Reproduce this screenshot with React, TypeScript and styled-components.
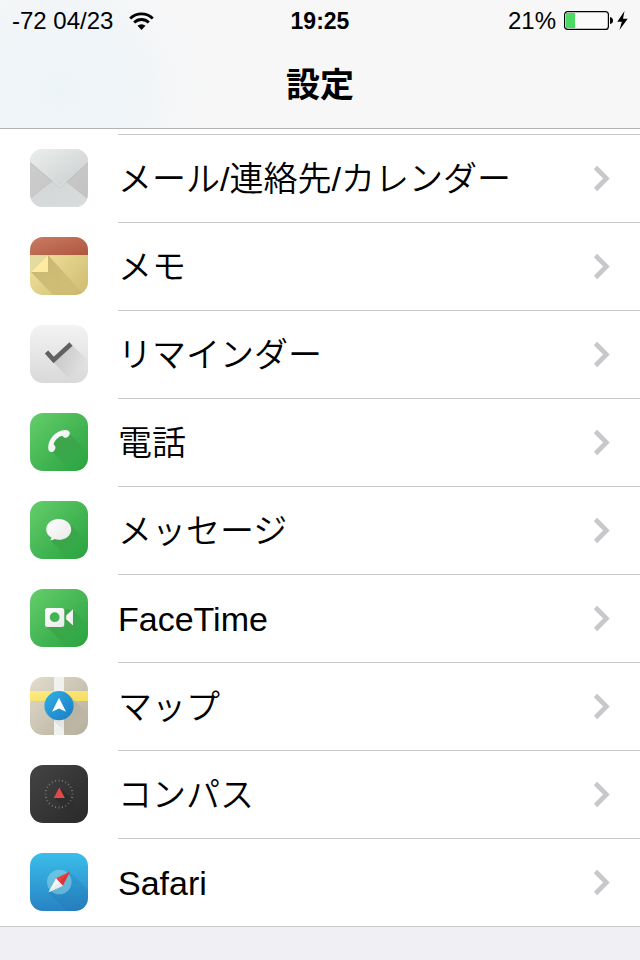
import React from "react";
import styled, { createGlobalStyle } from "styled-components";

const GlobalStyle = createGlobalStyle`
  *, *::before, *::after { box-sizing: border-box; }
  body {
    margin: 0;
    background: #efeff4;
    color: #000;
    font-family: "Liberation Sans", "Noto Sans CJK JP", sans-serif;
  }
`;

const Header = styled.header`
  border-bottom: 1px solid #b2b2b2;
  background: radial-gradient(ellipse 150px 140px at 60px 90px, #edf4f8 0%, #f1f5f8 50%, #f7f7f7 100%);
`;

const StatusBar = styled.div`
  display: grid;
  grid-template-columns: 1fr auto 1fr;
  align-items: center;
  height: 42px;
  padding: 0 12px;
  font-size: 24px;
  line-height: 42px;
`;

const StatusGroup = styled.div<{ $end?: boolean }>`
  display: flex;
  align-items: center;
  justify-content: ${(p) => (p.$end ? "flex-end" : "flex-start")};
  gap: ${(p) => (p.$end ? 8 : 16)}px;
`;

const Clock = styled.time`
  font-size: 23px;
  font-weight: 700;
`;

const Title = styled.h1`
  margin: 0;
  height: 86px;
  font-size: 34px;
  line-height: 86px;
  font-weight: 700;
  text-align: center;
`;

const List = styled.ul`
  list-style: none;
  margin: 0;
  padding: 5px 0 0;
  background: #fff;
  border-bottom: 1px solid #c8c7cc;
`;

const Label = styled.span`
  display: flex;
  flex: 1;
  align-items: center;
  justify-content: space-between;
  gap: 16px;
  padding-right: 30px;
  border-bottom: 1px solid #c8c7cc;
`;

const Name = styled.span`
  font-family: "Liberation Sans", "Noto Sans CJK JP DemiLight", "Noto Sans CJK JP", sans-serif;
  font-size: 34px;
  font-weight: 350;
  line-height: 48px;
`;

const Item = styled.li`
  &:first-child ${Label} { border-top: 1px solid #c8c7cc; }
  &:first-child a { min-height: 89px; }
  &:first-child a > svg { margin-top: 15px; }
  &:last-child ${Label} { border-bottom: 0; }
  &:last-child a { min-height: 87px; }
`;

const RowLink = styled.a`
  display: flex;
  gap: 30px;
  min-height: 88px;
  padding-left: 30px;
  color: inherit;
  text-decoration: none;
`;

const AppIcon = styled.svg`
  flex: none;
  width: 58px;
  height: 58px;
  margin-top: 14px;
  border-radius: 13px;
`;

const Glyph = styled.svg`
  flex: none;
  display: block;
`;

const Battery = styled.span`
  display: flex;
  align-items: center;
  gap: 4px;
`;

type GradProps = { id: string; from: string; to: string; vertical?: boolean };

const Grad = ({ id, from, to, vertical }: GradProps) => (
  <linearGradient id={id} x1="0" y1="0" x2={vertical ? "0" : "1"} y2="1">
    <stop offset="0" stopColor={from} />
    <stop offset="1" stopColor={to} />
  </linearGradient>
);

const Shade = ({ id, opacity }: { id: string; opacity: number }) => (
  <linearGradient id={id} gradientUnits="userSpaceOnUse" x1="26" y1="26" x2="48" y2="48">
    <stop offset="0" stopColor="#000" stopOpacity={opacity} />
    <stop offset="1" stopColor="#000" stopOpacity="0" />
  </linearGradient>
);

type TileProps = GradProps & { shade?: number; children: React.ReactNode };

const Tile = ({ id, from, to, vertical, shade = 0.12, children }: TileProps) => (
  <AppIcon viewBox="0 0 58 58" aria-hidden="true">
    <defs>
      <Grad id={id} from={from} to={to} vertical={vertical} />
      <Shade id={`${id}-shade`} opacity={shade} />
      <Grad id={`${id}-white`} from="#ffffff" to="#e8e8e8" />
    </defs>
    <rect width="58" height="58" fill={`url(#${id})`} />
    {children}
  </AppIcon>
);

const MailIcon = () => (
  <Tile id="mail" from="#cecece" to="#c2c2c2">
    <defs>
      <Grad id="mail-flap" from="#eceeee" to="#cbcece" />
      <Grad id="mail-base" from="#d2d6d7" to="#d9dcdd" />
    </defs>
    <path d="M0 51L29 28L58 51V58H0Z" fill="url(#mail-base)" stroke="#e4e4e4" strokeWidth=".6" />
    <path d="M0 14L30 39.500L58 14Z" fill="#000" opacity=".05" />
    <path d="M0 0H58V12.500L31 37Q30 38 29 37L0 12.500Z" fill="url(#mail-flap)" stroke="#eeeeee" strokeWidth=".5" />
  </Tile>
);

const NotesIcon = () => (
  <Tile id="notes" from="#f9eaa4" to="#cdbb71">
    <defs>
      <Grad id="notes-top" from="#ca7c62" to="#ae5540" />
      <Grad id="notes-fold" from="#ffefb0" to="#fde99c" />
      <linearGradient id="notes-cast" gradientUnits="userSpaceOnUse" x1="10" y1="26" x2="38" y2="58">
        <stop offset="0" stopColor="#8c7630" stopOpacity=".35" />
        <stop offset="1" stopColor="#8c7630" stopOpacity=".08" />
      </linearGradient>
    </defs>
    <path d="M0 18H18L0 36Z" fill="#e4dba0" />
    <path d="M18 18L54 58H23L1 35Z" fill="url(#notes-cast)" />
    <path d="M18 18V35H1Z" fill="url(#notes-fold)" />
    <rect width="58" height="18" fill="url(#notes-top)" />
  </Tile>
);

const RemindersIcon = () => (
  <Tile id="reminders" from="#f3f3f3" to="#d9d9d9" vertical shade={0.14}>
    <path d="M42 20L58 36V58H43L24 38L33 29Z" fill="url(#reminders-shade)" />
    <path d="M16.500 27L23.700 35L41 19" fill="none" stroke="#616161" strokeWidth="4.600" />
  </Tile>
);

const PhoneIcon = () => (
  <Tile id="phone" from="#65cd6b" to="#27a23f">
    <path d="M39 20L58 39V58H42L20 37Q24 24 39 20Z" fill="url(#phone-shade)" />
    <path
      d="M18.200 35C18 26 26 17.400 35 17C38 16.800 40 18.500 39.800 20.700C39.500 23.500 36.500 25.400 34.200 24.400C33.300 24 33 22.700 32 22.700C28.500 23.400 24.800 27 23.700 31C23.600 32 25.300 32.600 25.400 34C25.700 37 23.500 39.200 21.300 39C19.200 38.800 18.200 37.400 18.200 35Z"
      fill="url(#phone-white)"
    />
  </Tile>
);

const MessagesIcon = () => (
  <Tile id="messages" from="#65cd6b" to="#27a23f">
    <path d="M39 22L58 41V58H39L20 39Z" fill="url(#messages-shade)" />
    <path
      d="M28.700 18C35.600 18 41.200 22.500 41.200 28.400S35.600 38.800 28.700 38.800Q26.500 38.800 24.500 38.100Q22.500 39.500 20 39.300Q21.300 38.200 21.500 36.500Q16.200 33.500 16.200 28.400C16.200 22.500 21.800 18 28.700 18Z"
      fill="url(#messages-white)"
    />
  </Tile>
);

const FaceTimeIcon = () => (
  <Tile id="facetime" from="#65cd6b" to="#27a23f">
    <path d="M34 20L43 21L58 36V58H37L16 37Z" fill="url(#facetime-shade)" />
    <path
      d="M17.500 19H31.800Q34.300 19 34.300 21.500V35.500Q34.300 38 31.800 38H17.500Q15 38 15 35.500V21.500Q15 19 17.500 19Z"
      fill="url(#facetime-white)"
    />
    <circle cx="24.700" cy="28.200" r="4.900" fill="#43b452" />
    <path d="M36.200 26.500L43 20.300V36.500L36.200 30.300Z" fill="url(#facetime-white)" />
  </Tile>
);

const MapsIcon = () => (
  <Tile id="maps" from="#e2dccd" to="#b5ae9c">
    <defs>
      <Grad id="maps-road" from="#ffec82" to="#f3dc60" />
      <Grad id="maps-disc" from="#2fb0e6" to="#1b7cc4" />
    </defs>
    <rect x="24" width="10" height="58" fill="#f1f1f0" />
    <rect y="14" width="58" height="10" fill="url(#maps-road)" />
    <path d="M39.500 18.500L58 37V58H38L19 39Z" fill="url(#maps-shade)" />
    <circle cx="29" cy="28.700" r="14.600" fill="url(#maps-disc)" />
    <path d="M29 20.700L36 34.700L29 31.400L22 34.700Z" fill="#fff" />
  </Tile>
);

const CompassIcon = () => (
  <Tile id="compass" from="#444444" to="#292929" shade={0.2}>
    <circle
      cx="29"
      cy="29"
      r="13.500"
      fill="none"
      stroke="#8a8a8a"
      strokeWidth="2"
      pathLength="240"
      strokeDasharray="2 8"
      strokeDashoffset="1"
    />
    <path d="M29 22L42 34L46 45L34 43L24 33Z" fill="url(#compass-shade)" />
    <path d="M29.300 22.200L34.800 33H23.800Z" fill="#e4474b" />
  </Tile>
);

const SafariIcon = () => (
  <Tile id="safari" from="#3bbde9" to="#2783c4" vertical>
    <path d="M40 19L58 37V58H37L18 39Z" fill="#165d98" opacity=".14" />
    <circle cx="29.300" cy="29" r="12.300" fill="#a9e4e8" opacity=".45" />
    <path d="M40 18.500L26 25.300L32.700 32.700Z" fill="#e8423f" />
    <path d="M40 18.500L29.300 29L32.700 32.700Z" fill="#d5383a" />
    <path d="M18.500 39.300L26 25.300L32.700 32.700Z" fill="#f7f7f7" />
    <path d="M18.500 39.300L29.300 29L32.700 32.700Z" fill="#e8ecee" />
  </Tile>
);

const Wifi = () => (
  <Glyph width="25" height="18" viewBox="0 0 25 18" role="img" aria-label="Wi-Fi">
    <g fill="none" stroke="#000" strokeWidth="2.800">
      <path d="M1.200 6.500A16 16 0 0 1 23.800 6.500" />
      <path d="M5.200 10.500A10.400 10.400 0 0 1 19.800 10.500" />
    </g>
    <path d="M8.500 13.800A5.700 5.700 0 0 1 16.500 13.800L12.500 18Z" />
  </Glyph>
);

const BatteryLevel = () => (
  <Glyph width="49" height="20" viewBox="0 0 49 20" aria-hidden="true">
    <rect x=".6" y=".6" width="43.800" height="17.800" rx="3" fill="#fff" fillOpacity=".4" stroke="#000" strokeWidth="1.200" />
    <rect x="2" y="2" width="9" height="15" fill="#4cd964" />
    <path d="M46 6Q49 6.500 49 9.500T46 13Z" />
  </Glyph>
);

const Bolt = () => (
  <Glyph width="11" height="20" viewBox="0 0 11 20" aria-hidden="true">
    <path d="M7.500 0L0.300 10.800H4.800L2.500 19L10.700 7.800H6Z" />
  </Glyph>
);

const Chevron = () => (
  <Glyph width="17" height="27" viewBox="0 0 17 27" aria-hidden="true">
    <path d="M2.500 2.500L13.500 13.500L2.500 24.500" fill="none" stroke="#c7c7cc" strokeWidth="4.600" />
  </Glyph>
);

const rows = [
  { id: "mail", name: "メール/連絡先/カレンダー", Icon: MailIcon },
  { id: "notes", name: "メモ", Icon: NotesIcon },
  { id: "reminders", name: "リマインダー", Icon: RemindersIcon },
  { id: "phone", name: "電話", Icon: PhoneIcon },
  { id: "messages", name: "メッセージ", Icon: MessagesIcon },
  { id: "facetime", name: "FaceTime", Icon: FaceTimeIcon },
  { id: "maps", name: "マップ", Icon: MapsIcon },
  { id: "compass", name: "コンパス", Icon: CompassIcon },
  { id: "safari", name: "Safari", Icon: SafariIcon },
];

export default function App() {
  return (
    <>
      <GlobalStyle />
      <Header>
        <StatusBar>
          <StatusGroup>
            <span>-72 04/23</span>
            <Wifi />
          </StatusGroup>
          <Clock>19:25</Clock>
          <StatusGroup $end>
            <span>21%</span>
            <Battery>
              <BatteryLevel />
              <Bolt />
            </Battery>
          </StatusGroup>
        </StatusBar>
        <Title>設定</Title>
      </Header>
      <main>
        <List>
          {rows.map(({ id, name, Icon }) => (
            <Item key={id}>
              <RowLink href={`#${id}`}>
                <Icon />
                <Label>
                  <Name>{name}</Name>
                  <Chevron />
                </Label>
              </RowLink>
            </Item>
          ))}
        </List>
      </main>
    </>
  );
}
